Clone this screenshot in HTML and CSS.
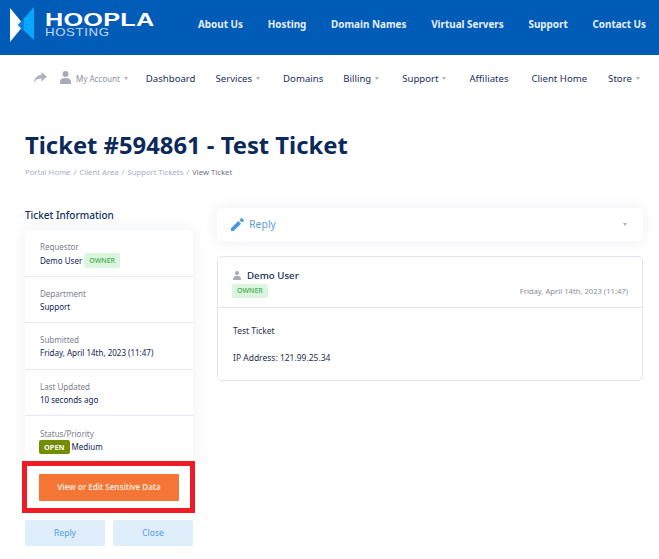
FILE: index.html
```html
<!DOCTYPE html>
<html lang="en">
<head>
<meta charset="utf-8">
<title>Ticket #594861 - Test Ticket</title>
<link rel="stylesheet" href="styles.css">
</head>
<body>
<header class="topbar">
  <a class="logo">
    <svg class="logo-mark" width="26" height="36" viewBox="0 0 26 36"><polygon points="0,1 14,18 0,35" fill="#fff"/><polygon points="24,0 24,33 8,18" fill="#0aa7ff"/><polygon points="8,18 14,11 14,25" fill="#0a7fe0"/></svg>
    <span class="logo-text"><span class="logo-main">HOOPLA</span><span class="logo-sub">HOSTING</span></span>
  </a>
  <nav class="topnav">
    <a>About Us</a><a>Hosting</a><a>Domain Names</a><a>Virtual Servers</a><a>Support</a><a>Contact Us</a>
  </nav>
</header>
<nav class="subnav">
  <svg class="share" width="13" height="11" viewBox="0 0 13 11"><path d="M7.5 0 13 4.7 7.5 9.4V6.6C4.4 6.6 2 7.6 0 10.5.6 6.4 3 3.2 7.5 2.8Z"/></svg>
  <span class="account">
    <svg width="11" height="13" viewBox="0 0 11 13"><circle cx="5.5" cy="3" r="3"/><path d="M0 13V10.5C0 8.3 2 7 5.5 7S11 8.3 11 10.5V13Z"/></svg>
    <span>My Account</span><i class="caret"></i>
  </span>
  <a class="m1">Dashboard</a>
  <a class="m2">Services<i class="caret"></i></a>
  <a class="m3">Domains</a>
  <a class="m4">Billing<i class="caret"></i></a>
  <a class="m5">Support<i class="caret"></i></a>
  <a class="m6">Affiliates</a>
  <a class="m7">Client Home</a>
  <a class="m8">Store<i class="caret"></i></a>
</nav>
<main class="page">
  <h1>Ticket #594861 - Test Ticket</h1>
  <div class="crumbs"><a>Portal Home</a><b>/</b><a>Client Area</a><b>/</b><a>Support Tickets</a><b>/</b><span>View Ticket</span></div>
  <div class="columns">
    <aside class="side">
      <h2>Ticket Information</h2>
      <div class="info">
        <div class="row r1"><label>Requestor</label><p>Demo User <span class="tag">OWNER</span></p></div>
        <div class="row r2"><label>Department</label><p>Support</p></div>
        <div class="row r3"><label>Submitted</label><p>Friday, April 14th, 2023 (11:47)</p></div>
        <div class="row r4"><label>Last Updated</label><p>10 seconds ago</p></div>
        <div class="row r5"><label>Status/Priority</label><p><span class="open">OPEN</span> Medium</p></div>
      </div>
      <div class="highlight"><a class="sensitive">View or Edit Sensitive Data</a></div>
      <div class="actions"><a>Reply</a><a>Close</a></div>
    </aside>
    <section class="content">
      <div class="reply">
        <svg width="13" height="13" viewBox="0 0 13 13"><path d="M0 10.3V13h2.7L10 5.7 7.3 3ZM12.7 3a.7.7 0 0 0 0-1L11 .3a.7.7 0 0 0-1 0L8.4 1.9l2.7 2.7Z"/></svg>
        <span>Reply</span><i class="caret"></i>
      </div>
      <article class="message">
        <div class="msg-head">
          <div class="msg-left">
            <div class="msg-user"><svg width="8" height="9" viewBox="0 0 11 13"><circle cx="5.5" cy="3" r="3"/><path d="M0 13V10.5C0 8.3 2 7 5.5 7S11 8.3 11 10.5V13Z"/></svg><span>Demo User</span></div>
            <span class="tag">OWNER</span>
          </div>
          <time>Friday, April 14th, 2023 (11:47)</time>
        </div>
        <div class="msg-body"><p>Test Ticket</p><p>IP Address: 121.99.25.34</p></div>
      </article>
    </section>
  </div>
</main>
</body>
</html>
```
FILE: styles.css
```css
* { box-sizing: border-box; }
html, body { margin: 0; height: 559px; overflow: hidden; }
body { background: #fff; font-family: "Noto Sans", sans-serif; color: #0b2a5b; }
a { color: inherit; text-decoration: none; }
p { margin: 0; }
.topbar { height: 55px; background: #015cb8; display: flex; align-items: flex-start; }
.logo { display: flex; width: 198px; padding: 7px 0 0 10px; gap: 9px; color: #fff; flex: none; }
.logo-text { display: flex; flex-direction: column; padding-top: 5px; width: 110px; }
.logo-main { font: bold 18px/16px "Liberation Sans", sans-serif; letter-spacing: 0.2px; transform: scaleX(1.4); transform-origin: left; white-space: nowrap; width: 78px; }
.logo-sub { font: 10.5px/9px "Liberation Sans", sans-serif; letter-spacing: 0.5px; transform: scaleX(1.26); transform-origin: left; color: #c3d8ef; white-space: nowrap; width: 50px; }
.topnav { display: flex; font-size: 9.9px; font-weight: 700; color: #e6effa; line-height: 49px; white-space: nowrap; justify-content: space-between; width: 448px; }
.subnav { height: 46px; background: #fff; display: flex; align-items: center; font-size: 9.6px; color: #1c2f5e; white-space: nowrap; padding: 1px 0 0 34px; box-shadow: 0 1px 0 #f3f3f3; }
.share { fill: #aeb0ba; margin-right: 13px; margin-top: -2px; }
.account { display: flex; align-items: center; color: #8d8fa3; font-size: 8px; margin-right: 18px; }
.account svg { fill: #a8aab6; margin-right: 5px; margin-top: -3px; }
.caret { display: inline-block; width: 0; height: 0; border: 2.5px solid transparent; border-top: 3px solid #b0b2bd; border-bottom: 0; margin-left: 4px; vertical-align: 2px; }
.m1 { margin-right: 20px; } .m2 { margin-right: 23px; } .m3 { margin-right: 20px; } .m4 { margin-right: 23px; } .m5 { margin-right: 23px; } .m6 { margin-right: 23px; } .m7 { margin-right: 21px; }
.page { background: #fff; padding: 29px 16px 0 25px; }
h1 { margin: 0; font-size: 23.8px; line-height: 30px; font-weight: 700; color: #0b2a5b; white-space: nowrap; }
.crumbs { margin-top: 6px; font-size: 7.7px; line-height: 12px; color: #a9acc4; display: flex; }
.crumbs b { font-weight: 400; margin: 0 3px; }
.crumbs span { color: #6f7286; }
.columns { display: flex; gap: 24px; margin-top: 30px; }
.side { width: 168px; flex: none; }
h2 { margin: 0; font-size: 10px; line-height: 14px; font-weight: 500; color: #0f3161; }
.info { margin-top: 8px; background: #fff; border-radius: 5px 5px 0 0; box-shadow: 0 0 18px rgba(30, 40, 90, .07); }
.row { padding: 11px 15px 0; border-bottom: 1px solid #e7e8f2; font-size: 8px; height: 46.6px; white-space: nowrap; }
.row.r5 { border: 0; height: 45px; padding-top: 12px; }
.r5 label { line-height: 11px; }
.row label { display: block; color: #7c7e8e; line-height: 12px; }
.row p { color: #0f2554; line-height: 14px; display: flex; align-items: center; gap: 2px; }
.tag { display: inline-block; background: #dcf5de; color: #3fae4e; font-size: 7px; font-weight: 500; line-height: 15px; height: 15px; padding: 0 5px; border-radius: 2px; }
.open { background: #738c00; color: #fff; font-size: 7.4px; font-weight: 700; line-height: 14px; height: 14px; padding: 0 5px; border-radius: 2px; margin-left: -1px; }
.highlight { position: relative; margin: 0 -3px; width: 173px; height: 52px; border: 5px solid #ee1c25; padding: 8px 11px 0 12px; background: #fff; }
.sensitive { display: block; height: 27px; background: #f47535; border-radius: 1px; color: #fde9dd; font-size: 8px; font-weight: 600; line-height: 26px; text-align: center; white-space: nowrap; }
.actions { display: flex; gap: 8px; margin-top: 7px; }
.actions a { width: 80px; height: 26px; background: #deeefb; border-radius: 2px; color: #559be0; font-size: 8.5px; line-height: 26px; text-align: center; }
.content { flex: 1; min-width: 0; }
.reply { height: 33px; background: #fff; border-radius: 5px; box-shadow: 0 0 16px rgba(30, 40, 90, .08); display: flex; align-items: center; padding: 0 16px 1px 14px; color: #5b9fe2; font-size: 10.5px; }
.reply svg { fill: #4a97e4; margin-right: 5px; }
.reply span { flex: 1; }
.message { margin-top: 15px; border: 1px solid #e3e5f1; border-radius: 5px; height: 125px; }
.msg-head { height: 51px; border-bottom: 1px solid #e3e5f1; padding: 11px 14px 9px; display: flex; justify-content: space-between; align-items: flex-end; }
.msg-left { display: flex; flex-direction: column; align-items: flex-start; }
.msg-user { display: flex; align-items: center; font-size: 9.7px; line-height: 15px; font-weight: 500; color: #0f2a5c; margin-bottom: 1px; padding-left: 1px; }
.msg-user svg { fill: #a8aab6; margin-right: 6px; }
.msg-head .tag { height: 14px; line-height: 14px; }
time { color: #8a8c99; font-size: 7.65px; line-height: 14px; }
.msg-body { padding: 16px 15px 0; font-size: 8.5px; line-height: 13px; color: #26324f; }
.msg-body p + p { margin-top: 14px; }
```
